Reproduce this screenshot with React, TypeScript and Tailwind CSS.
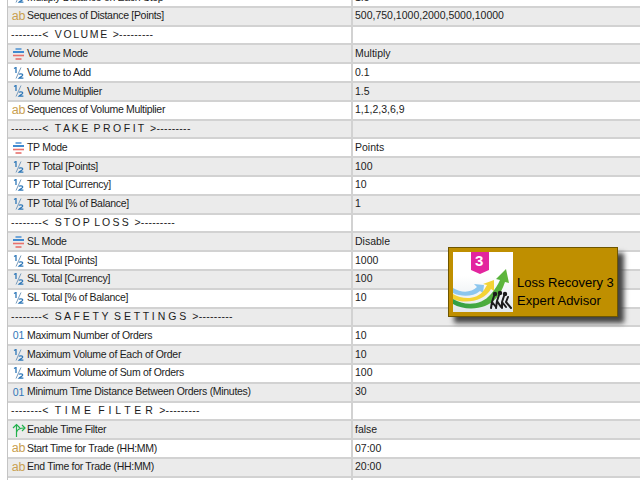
// Expert advisor inputs table with the promo badge on top
type Kind = "ab" | "half" | "int" | "enum" | "bool" | "none";

const rows: { kind: Kind; label: string; value?: string; track?: string }[] = [
  { kind: "half", label: "Multiply Distance on Each Step", value: "1.5" },
  { kind: "ab", label: "Sequences of Distance [Points]", value: "500,750,1000,2000,5000,10000" },
  { kind: "none", label: "V O L U M E", track: "tracking-[-0.6px]" },
  { kind: "enum", label: "Volume Mode", value: "Multiply" },
  { kind: "half", label: "Volume to Add", value: "0.1" },
  { kind: "half", label: "Volume Multiplier", value: "1.5" },
  { kind: "ab", label: "Sequences of Volume Multiplier", value: "1,1,2,3,6,9" },
  { kind: "none", label: "T A K E  P R O F I T", track: "tracking-[-0.2px]" },
  { kind: "enum", label: "TP Mode", value: "Points" },
  { kind: "half", label: "TP Total [Points]", value: "100" },
  { kind: "half", label: "TP Total [Currency]", value: "10" },
  { kind: "half", label: "TP Total [% of Balance]", value: "1" },
  { kind: "none", label: "S T O P  L O S S", track: "tracking-[-0.33px]" },
  { kind: "enum", label: "SL Mode", value: "Disable" },
  { kind: "half", label: "SL Total [Points]", value: "1000" },
  { kind: "half", label: "SL Total [Currency]", value: "100" },
  { kind: "half", label: "SL Total [% of Balance]", value: "10" },
  { kind: "none", label: "S A F E T Y  S E T T I N G S" },
  { kind: "int", label: "Maximum Number of Orders", value: "10" },
  { kind: "half", label: "Maximum Volume of Each of Order", value: "10" },
  { kind: "half", label: "Maximum Volume of Sum of Orders", value: "100" },
  { kind: "int", label: "Minimum Time Distance Between Orders (Minutes)", value: "30" },
  { kind: "none", label: "T I M E  F I L T E R", track: "tracking-[0.45px]" },
  { kind: "bool", label: "Enable Time Filter", value: "false" },
  { kind: "ab", label: "Start Time for Trade (HH:MM)", value: "07:00" },
  { kind: "ab", label: "End Time for Trade (HH:MM)", value: "20:00" },
  { kind: "none", label: "" },
];

function TypeIcon({ kind }: { kind: Kind }) {
  if (kind === "ab") return <span className="text-[12.5px] leading-none tracking-[-0.3px] text-[#c9a050]">ab</span>;
  if (kind === "int") return <span className="text-[10.5px] leading-none text-[#2f78b8]">01</span>;
  if (kind === "half")
    return (
      <svg width="11" height="12" viewBox="0 0 11 12" fill="none">
        <path d="M1 1.5 3 .5V6" stroke="#2f78b8" strokeWidth="1.3" />
        <path d="M8 .5 3 11.5" stroke="#7a9cbc" strokeWidth="1" />
        <path d="M6 7.5c.5-1 3.8-1 3.8.6 0 1.2-2.6 1.8-3.8 3h4.4" stroke="#2f78b8" strokeWidth="1.2" />
      </svg>
    );
  if (kind === "enum")
    return (
      <svg width="11" height="12" viewBox="0 0 11 12">
        <path d="M2.5 1h6" stroke="#3f8ad0" strokeWidth="1.4" />
        <path d="M0 4h11" stroke="#3f8ad0" strokeWidth="2" />
        <path d="M0 7.5h11" stroke="#e8706c" strokeWidth="1.6" />
        <path d="M2.5 11h6" stroke="#e8706c" strokeWidth="1.6" />
      </svg>
    );
  if (kind === "bool")
    return (
      <svg width="14" height="14" viewBox="0 0 14 14" fill="none" stroke="#22b14c" strokeWidth="1.2">
        <path d="M4.5 14V2" />
        <path d="M1 5 4.5 1.5 8 5" />
        <path d="M4.5 9c1-3 3.5-4 8-4" />
        <path d="M10 2l3 3-3 3" />
      </svg>
    );
  return null;
}

function Logo() {
  return (
    <div className="relative h-[60px] w-[60px] shrink-0 overflow-hidden bg-white">
      <svg width="60" height="60" viewBox="0 0 60 60">
        <defs>
          <linearGradient id="bg" x1="0" y1="0" x2="0" y2="1">
            <stop offset="0.4" stopColor="#ffffff" />
            <stop offset="1" stopColor="#e2e8ec" />
          </linearGradient>
          <linearGradient id="gr" x1="0" y1="0" x2="1" y2="0">
            <stop offset="0" stopColor="#2f9e46" />
            <stop offset="1" stopColor="#62b83a" />
          </linearGradient>
        </defs>
        <rect width="60" height="60" fill="url(#bg)" />
        <path d="M18 0h18v18l-9 4-9-4z" fill="#e3259e" />
        <path d="M0 36C8 41 18 41 24 35L21 32 31 33 30 41 27 39C20 45 8 45 0 41z" fill="#8cc6ee" />
        <path d="M0 42C10 48 24 48 31 38L34 33 30 32 41 28 41 39 38 37C32 48 14 53 0 47z" fill="#f3d335" />
        <path d="M0 47C12 54 28 54 38 42 42 37 45 33 47 28L43 27 53 17 56 31 52 30C48 42 42 50 32 54 22 58 8 57 0 52z" fill="url(#gr)" />
        <g stroke="#1c1c1c" strokeWidth="2" fill="#1c1c1c" strokeLinecap="round">
          <circle cx="42" cy="42" r="1.2" />
          <path d="M41 44 39 50M39 50 38 56M39 50 43 55" fill="none" />
          <circle cx="47" cy="41" r="1.2" />
          <path d="M46 43 44 49M44 49 43 56M44 49 48 55" fill="none" />
          <circle cx="52" cy="42" r="1.2" />
          <path d="M51 44 49 50M49 50 49 56M49 50 53 55" fill="none" />
          <path d="M55 45 53 50M53 50 58 56" fill="none" />
        </g>
      </svg>
      <span className="absolute left-[22px] top-[1px] text-[15px] font-bold leading-[16px] text-white">3</span>
    </div>
  );
}

export default function App() {
  return (
    <div className="relative h-[480px] w-[640px] overflow-hidden bg-white font-['Liberation_Sans',sans-serif] text-[10.5px] text-[#1c1c1c]">
      <div className="-mt-[11px] ml-[7px] border-l border-[#c4c4c4]">
        {rows.map((row, i) => (
          <div
            key={i}
            className={`flex h-[18.8px] items-center border-b-2 border-[#d2d2d2] ${i % 2 ? "bg-[#ebebeb]" : "bg-white"}`}
          >
            <div className="flex h-full w-[345px] shrink-0 items-center border-r-2 border-[#d2d2d2]">
              {row.kind === "none" ? (
                row.label && (
                  <span className="ml-[3px] flex whitespace-pre">
                    <span className="tracking-[0.4px]">--------&lt;</span>
                    <span className={`mx-[6px] ${row.track ?? ""}`}>{row.label}</span>
                    <span className="tracking-[0.3px]">&gt;---------</span>
                  </span>
                )
              ) : (
                <>
                  <span className="flex w-[19px] shrink-0 justify-center pl-[2px]">
                    <TypeIcon kind={row.kind} />
                  </span>
                  <span className="whitespace-pre tracking-[-0.3px]">{row.label}</span>
                </>
              )}
            </div>
            {row.value && <span className="ml-[2px]">{row.value}</span>}
          </div>
        ))}
      </div>

      <div className="absolute left-[448px] top-[247px] flex h-[70px] w-[170px] items-center gap-[4px] border border-[#6e5600] bg-[#bf8f00] pl-[4px] shadow-[6px_6px_5px_#444444]">
        <Logo />
        <div className="mt-[19px] whitespace-nowrap text-[13px] leading-[18px] text-black">
          <div>Loss Recovery 3</div>
          <div>Expert Advisor</div>
        </div>
      </div>
    </div>
  );
}
